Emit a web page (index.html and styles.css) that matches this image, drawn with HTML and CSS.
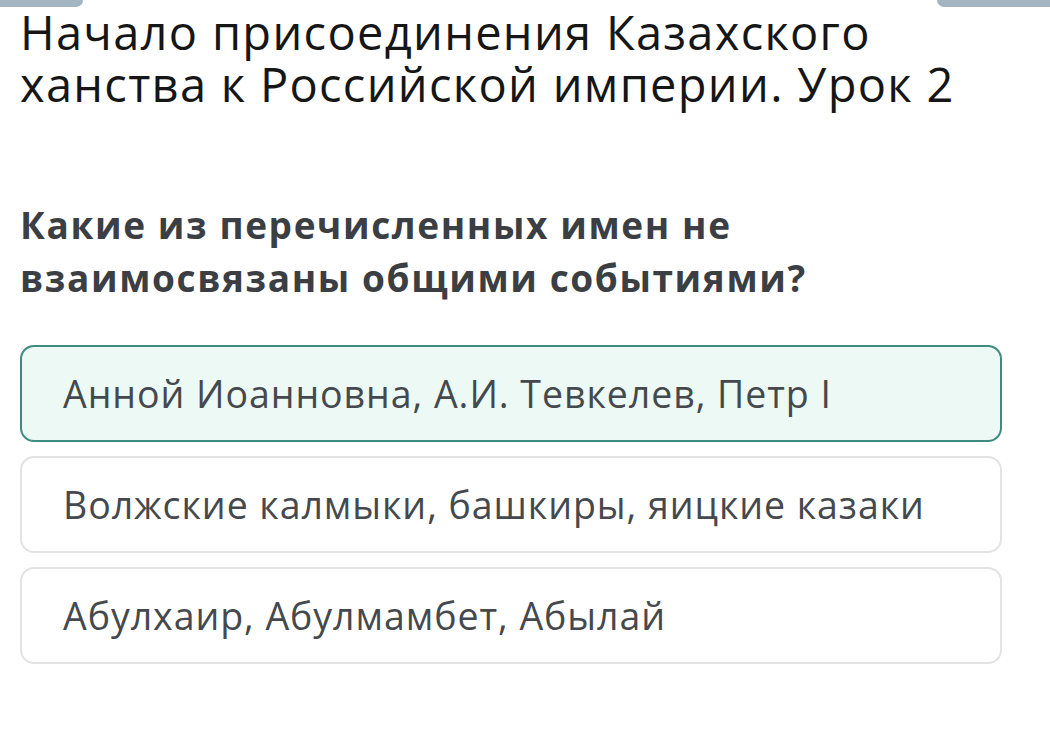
FILE: index.html
```html
<!DOCTYPE html>
<html lang="ru">
<head>
    <meta charset="UTF-8">
    <meta name="viewport" content="width=device-width, initial-scale=1.0">
    <title>Урок 2</title>
    <link rel="stylesheet" href="styles.css">
</head>
<body>
    <div class="tab tab-left"></div>
    <div class="tab tab-right"></div>

    <div class="lesson">
        <h1 class="lesson-title">Начало присоединения Казахского ханства к Российской империи. Урок 2</h1>

        <h2 class="question">Какие из перечисленных имен не взаимосвязаны общими событиями?</h2>

        <div class="answers">
            <div class="answer selected">Анной Иоанновна, А.И. Тевкелев, Петр I</div>
            <div class="answer">Волжские калмыки, башкиры, яицкие казаки</div>
            <div class="answer">Абулхаир, Абулмамбет, Абылай</div>
        </div>
    </div>
</body>
</html>
```

FILE: styles.css
```css
body {
    margin: 0;
    background: #fff;
    font-family: "Open Sans", "Noto Sans", sans-serif;
}
.tab {
    position: absolute;
    top: 0;
    height: 7px;
    background: #a3b5c3;
}
.tab-left {
    left: 0;
    width: 83px;
    border-bottom-right-radius: 8px;
}
.tab-right {
    right: 0;
    width: 113px;
    border-bottom-left-radius: 8px;
}
.lesson {
    width: 982px;
    margin-left: 20px;
    padding-top: 6px;
}
.lesson-title {
    margin: 0;
    font-size: 47px;
    font-weight: 400;
    line-height: 52px;
    letter-spacing: 1.3px;
    color: #161616;
}
.question {
    margin: 88px 0 0;
    font-size: 37px;
    font-weight: 700;
    line-height: 53px;
    letter-spacing: 1.6px;
    color: #3b3e43;
}
.answers {
    margin-top: 41px;
    display: flex;
    flex-direction: column;
    gap: 14px;
}
.answer {
    height: 97px;
    box-sizing: border-box;
    display: flex;
    align-items: center;
    padding: 0 41px;
    border: 2px solid #e3e3e3;
    border-radius: 14px;
    font-size: 37.5px;
    letter-spacing: 0.95px;
    color: #45494d;
}
.answer.selected {
    border-color: #3f8b80;
    background: #ecf9f4;
}
```
